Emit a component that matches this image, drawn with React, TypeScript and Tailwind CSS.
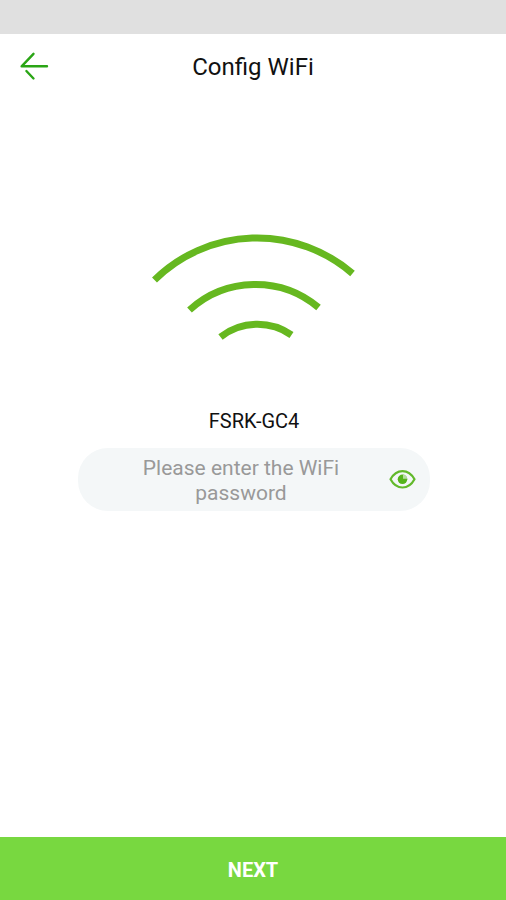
import React, { useState } from 'react';

const BackIcon = () => (
  <svg
    className="w-8 h-8"
    viewBox="0 0 32 32"
    fill="none"
    stroke="#2aa515"
    strokeWidth="2.4"
    strokeLinecap="round"
    strokeLinejoin="round"
  >
    <path d="M29 15.3H3.6L15.5 2.8" />
    <path d="M8.4 20L15.5 27.5" />
  </svg>
);

const WifiSignal = () => (
  <svg className="w-[210px] h-[114px]" viewBox="0 0 210 114" fill="none" stroke="#66b820" strokeWidth="7">
    <path d="M5.5 50A146 146 0 0 1 203.5 43.5" />
    <path d="M40.5 80A98 98 0 0 1 169.5 77.5" />
    <path d="M71.5 107A60 60 0 0 1 142.5 105" />
  </svg>
);

const EyeIcon = () => (
  <svg className="w-7 h-7" viewBox="0 0 28 28" fill="none">
    <path
      d="M2.5 13.3C5.5 7.8 9.5 5.1 14.5 5.1S23.5 7.8 26.500 13.3C23.5 18.800 19.5 21.5 14.5 21.5S5.5 18.8 2.5 13.3Z"
      stroke="#62b92b"
      strokeWidth="2.2"
      strokeLinejoin="round"
    />
    <circle cx="14.5" cy="13.3" r="4.8" fill="#55b41c" />
    <path d="M15 12.800V8.500A4.8 4.8 0 0 1 19.300 12.800Z" fill="#b4dda0" />
  </svg>
);

export default function App() {
  const [password, setPassword] = useState('');
  const [visible, setVisible] = useState(true);

  return (
    <div className="min-h-screen flex flex-col bg-white text-[#111111] font-['Roboto',sans-serif]">
      <div className="h-[34px] bg-[#e0e0e0]" />

      <header className="grid grid-cols-[32px_1fr_32px] items-center h-[66px] px-[18px]">
        <button type="button" aria-label="Back">
          <BackIcon />
        </button>
        <h1 className="text-center text-2xl">Config WiFi</h1>
      </header>

      <main className="flex-1 flex flex-col items-center pl-[78px] pr-[76px] pt-[130px]">
        <WifiSignal />
        <label htmlFor="password" className="mt-16 text-xl leading-[26px]">
          FSRK-GC4
        </label>

        {/* Password field */}
        <div className="mt-[14px] w-full max-w-[352px] flex items-center rounded-[30px] bg-[#f4f7f8] pl-4 pr-[14px]">
          <textarea
            id="password"
            rows={2}
            value={password}
            onChange={(e) => setPassword(e.target.value)}
            placeholder="Please enter the WiFi password"
            className={`block flex-1 min-w-0 px-3 pt-2 pb-[5px] resize-none overflow-hidden bg-transparent text-center text-[21px] leading-[25px] placeholder:text-[#999999] focus:outline-none ${
              visible ? '' : '[-webkit-text-security:disc]'
            }`}
          />
          <button type="button" aria-label="Show password" aria-pressed={visible} onClick={() => setVisible(!visible)}>
            <EyeIcon />
          </button>
        </div>
      </main>

      <button type="button" className="h-[63px] w-full bg-[#78d840] pt-0.5 text-xl font-bold text-white">
        NEXT
      </button>
    </div>
  );
}
